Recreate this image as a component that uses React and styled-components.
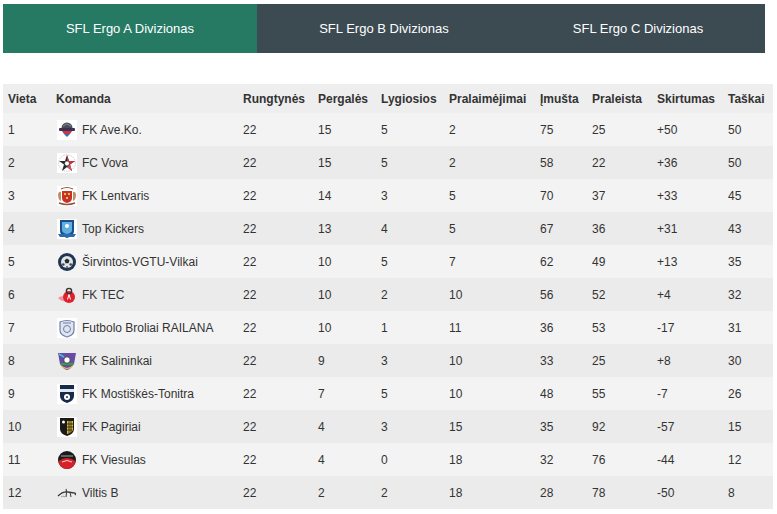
import React from "react";
import styled, { createGlobalStyle } from "styled-components";

const GlobalStyle = createGlobalStyle`
    body {
        margin: 0;
        background: #ffffff;
        font-family: "Liberation Sans", Arial, sans-serif;
        color: #333333;
    }
`;

const divisions = ["SFL Ergo A Divizionas", "SFL Ergo B Divizionas", "SFL Ergo C Divizionas"];

const columns = [
    { title: "Vieta", width: 48 },
    { title: "Komanda", width: 187 },
    { title: "Rungtynės", width: 75 },
    { title: "Pergalės", width: 63 },
    { title: "Lygiosios", width: 68 },
    { title: "Pralaimėjimai", width: 91 },
    { title: "Įmušta", width: 52 },
    { title: "Praleista", width: 65 },
    { title: "Skirtumas", width: 71 },
    { title: "Taškai", width: 50 },
];

const standings = [
    [1, "FK Ave.Ko.", "aveko", 22, 15, 5, 2, 75, 25, "+50", 50],
    [2, "FC Vova", "vova", 22, 15, 5, 2, 58, 22, "+36", 50],
    [3, "FK Lentvaris", "lentvaris", 22, 14, 3, 5, 70, 37, "+33", 45],
    [4, "Top Kickers", "kickers", 22, 13, 4, 5, 67, 36, "+31", 43],
    [5, "Širvintos-VGTU-Vilkai", "sirvintos", 22, 10, 5, 7, 62, 49, "+13", 35],
    [6, "FK TEC", "tec", 22, 10, 2, 10, 56, 52, "+4", 32],
    [7, "Futbolo Broliai RAILANA", "broliai", 22, 10, 1, 11, 36, 53, "-17", 31],
    [8, "FK Salininkai", "salininkai", 22, 9, 3, 10, 33, 25, "+8", 30],
    [9, "FK Mostiškės-Tonitra", "mostiskes", 22, 7, 5, 10, 48, 55, "-7", 26],
    [10, "FK Pagiriai", "pagiriai", 22, 4, 3, 15, 35, 92, "-57", 15],
    [11, "FK Viesulas", "viesulas", 22, 4, 0, 18, 32, 76, "-44", 12],
    [12, "Viltis B", "viltis", 22, 2, 2, 18, 28, 78, "-50", 8],
];

// small club crests, roughly drawn at 20x20
function Logo({ kind }) {
    switch (kind) {
        case "aveko":
            return (
                <svg width="20" height="20" viewBox="0 0 20 20">
                    <rect width="20" height="20" fill="#fff" />
                    <circle cx="10" cy="8" r="5.5" fill="#4a4d5c" />
                    <path d="M6 6 L10 4 L14 6 M7 10 L13 10" stroke="#9a9aa6" strokeWidth="0.8" fill="none" />
                    <rect x="2" y="8" width="16" height="3" rx="1" fill="#3e3050" />
                    <path d="M5 11 L15 11 L13 14 L7 14 Z" fill="#c43848" />
                    <path d="M7 14 L13 14 L10 17 Z" fill="#3b6ab0" />
                </svg>
            );
        case "vova":
            return (
                <svg width="20" height="20" viewBox="0 0 20 20">
                    <rect width="20" height="20" fill="#fff" />
                    <circle cx="10" cy="10" r="8.3" fill="none" stroke="#bbb" strokeWidth="0.8" strokeDasharray="1.5 1" />
                    <path d="M10 2 L12 8 L18 8 L13 11.5 L15 18 L10 14 L5 18 L7 11.5 L2 8 L8 8 Z" fill="#2a2a2a" />
                    <path d="M10 2 L12 8 L18 8 L13 11.5 L10 10 Z" fill="#d8283a" />
                    <path d="M13 11.5 L15 18 L10 14 Z" fill="#e05060" />
                    <circle cx="10" cy="10.5" r="2.4" fill="#fff" stroke="#333" strokeWidth="0.6" />
                </svg>
            );
        case "lentvaris":
            return (
                <svg width="20" height="20" viewBox="0 0 20 20">
                    <rect width="20" height="20" fill="#fff" />
                    <path d="M4 3 Q10 0 16 3" stroke="#8a5a3a" strokeWidth="1.2" fill="none" />
                    <path d="M1 8 Q2 5 4 6 L4 15 Q1 14 1 8 Z" fill="#c09060" />
                    <path d="M19 8 Q18 5 16 6 L16 15 Q19 14 19 8 Z" fill="#c09060" />
                    <path d="M5 5 L15 5 L15 12 Q15 16 10 17 Q5 16 5 12 Z" fill="#c8302c" />
                    <rect x="7" y="7" width="2" height="2" fill="#f0c040" />
                    <rect x="11" y="7" width="2" height="2" fill="#f0c040" />
                    <rect x="9" y="11" width="2" height="2" fill="#f0c040" />
                    <path d="M2 17 Q10 20 18 17" stroke="#8a5a3a" strokeWidth="1.4" fill="none" />
                </svg>
            );
        case "kickers":
            return (
                <svg width="20" height="20" viewBox="0 0 20 20">
                    <rect width="20" height="20" fill="#fff" />
                    <path d="M3 1 L17 1 L17 12 Q17 17 10 19 Q3 17 3 12 Z" fill="#1d4e8c" />
                    <path d="M5 3 L15 3 L15 11 Q15 14 10 15 Q5 14 5 11 Z" fill="#5fb0e0" />
                    <circle cx="10" cy="7" r="2" fill="#fff" />
                    <path d="M1 15 L19 15 L17 18 L3 18 Z" fill="#2a68b0" />
                </svg>
            );
        case "sirvintos":
            return (
                <svg width="20" height="20" viewBox="0 0 20 20">
                    <circle cx="10" cy="10" r="9" fill="#1f3550" />
                    <circle cx="10" cy="10" r="6" fill="#dfe5ec" />
                    <path d="M10 6.5 L12.5 8.3 L11.5 11.2 L8.5 11.2 L7.5 8.3 Z" fill="#2a2a2a" />
                    <circle cx="6.3" cy="12.5" r="1.3" fill="#444" />
                    <circle cx="13.7" cy="12.5" r="1.3" fill="#444" />
                    <circle cx="10" cy="15" r="1" fill="#555" />
                </svg>
            );
        case "tec":
            return (
                <svg width="20" height="20" viewBox="0 0 20 20">
                    <path d="M1 13 Q4 10 8 12 L8 16 Q4 17 1 13 Z" fill="#f07080" opacity="0.7" />
                    <circle cx="12" cy="12" r="6" fill="#e0202a" />
                    <circle cx="12" cy="6" r="2.6" fill="none" stroke="#333" strokeWidth="1.4" />
                    <path d="M10.5 14.5 L12 9.5 L13.5 14.5" stroke="#fff" strokeWidth="1" fill="none" />
                </svg>
            );
        case "broliai":
            return (
                <svg width="20" height="20" viewBox="0 0 20 20">
                    <rect width="20" height="20" fill="#fff" />
                    <path d="M3 4 Q10 1 17 4 L17 12 Q17 17 10 19 Q3 17 3 12 Z" fill="#dfe4f0" stroke="#6f7fa8" strokeWidth="1.2" />
                    <circle cx="10" cy="11" r="3.5" fill="none" stroke="#6f7fa8" strokeWidth="1" />
                    <path d="M6 5 L14 5" stroke="#6f7fa8" strokeWidth="1" />
                </svg>
            );
        case "salininkai":
            return (
                <svg width="20" height="20" viewBox="0 0 20 20">
                    <path d="M1 2 L19 2 L17 13 Q14 18 10 19 Q6 18 3 13 Z" fill="#6a4aa8" />
                    <path d="M4 14 Q10 20 16 14 L15 16 Q10 20 5 16 Z" fill="#f0d020" />
                    <path d="M3 12 L17 12 L16 14 L4 14 Z" fill="#30a040" />
                    <circle cx="10" cy="9" r="3.2" fill="#fff" stroke="#222" strokeWidth="0.7" />
                    <path d="M2 3 L7 6" stroke="#40c0e0" strokeWidth="1.5" />
                </svg>
            );
        case "mostiskes":
            return (
                <svg width="20" height="20" viewBox="0 0 20 20">
                    <rect width="20" height="20" fill="#fff" />
                    <path d="M3 1 L17 1 L17 12 Q17 17 10 19 Q3 17 3 12 Z" fill="#172a4a" />
                    <rect x="3" y="5" width="14" height="3" fill="#dfe6f0" />
                    <circle cx="10" cy="13" r="3" fill="#fff" />
                    <circle cx="10" cy="13" r="1" fill="#172a4a" />
                </svg>
            );
        case "pagiriai":
            return (
                <svg width="20" height="20" viewBox="0 0 20 20">
                    <rect width="20" height="20" fill="#fff" />
                    <path d="M3 1 L17 1 L17 12 Q17 17 10 19 Q3 17 3 12 Z" fill="#1a1a1a" />
                    <path d="M10 4 L16 4 L16 12 Q16 15 10 17 Z" fill="#e0bc2a" />
                    <path d="M10 7 L16 7 M10 10 L16 10 M10 13 L15 13 M12 4 L12 16 M14 4 L14 15" stroke="#1a1a1a" strokeWidth="0.8" />
                    <circle cx="6.5" cy="5" r="1.5" fill="#fff" />
                </svg>
            );
        case "viesulas":
            return (
                <svg width="20" height="20" viewBox="0 0 20 20">
                    <circle cx="10" cy="10" r="9" fill="#1a1a1a" />
                    <path d="M1.5 11 Q10 5 18.5 11 Q17 19 10 19 Q3 19 1.5 11 Z" fill="#d8202a" />
                    <path d="M5 12 Q10 9 15 12" stroke="#fff" strokeWidth="0.8" fill="none" />
                    <path d="M4 6 L16 6" stroke="#ccc" strokeWidth="0.8" />
                </svg>
            );
        case "viltis":
        default:
            return (
                <svg width="20" height="20" viewBox="0 0 20 20">
                    <path d="M1 13 Q6 8 11 9 L18 10 Q19 11 18 12" stroke="#333" strokeWidth="1.3" fill="none" />
                    <path d="M9 6 Q10 8 9 14 M13 9 L14 14" stroke="#444" strokeWidth="1.1" fill="none" />
                    <path d="M4 14 Q6 12 8 14" stroke="#888" strokeWidth="0.8" fill="none" />
                </svg>
            );
    }
}

export default function App() {
    const [active, setActive] = React.useState(0);
    return (
        <Page>
            <GlobalStyle />
            <Tabs>
                {divisions.map((name, i) => (
                    <Tab key={name} $active={i === active} onClick={() => setActive(i)}>
                        {name}
                    </Tab>
                ))}
            </Tabs>
            <Table>
                <colgroup>
                    {columns.map((col) => (
                        <col key={col.title} width={col.width} />
                    ))}
                </colgroup>
                <thead>
                    <HeadRow>
                        {columns.map((col) => (
                            <Th key={col.title}>{col.title}</Th>
                        ))}
                    </HeadRow>
                </thead>
                <tbody>
                    {standings.map(([place, team, logo, ...stats]) => (
                        <Row key={place}>
                            <Td>{place}</Td>
                            <Td>
                                <Team>
                                    <LogoBox>
                                        <Logo kind={logo} />
                                    </LogoBox>
                                    {team}
                                </Team>
                            </Td>
                            {stats.map((value, i) => (
                                <Td key={i}>{value}</Td>
                            ))}
                        </Row>
                    ))}
                </tbody>
            </Table>
        </Page>
    );
}

const Page = styled.div`
    padding: 4px 0 0 3px;
`;

const Tabs = styled.div`
    display: flex;
    width: 762px;
`;

const Tab = styled.div`
    flex: 1;
    height: 49px;
    display: flex;
    align-items: center;
    justify-content: center;
    background: ${(p) => (p.$active ? "#267a64" : "#3c4b52")};
    color: #ffffff;
    font-size: 13px;
    cursor: pointer;
`;

const Table = styled.table`
    margin-top: 31px;
    width: 770px;
    border-collapse: collapse;
    table-layout: fixed;
    font-size: 12px;
    color: #333333;
`;

const HeadRow = styled.tr`
    height: 29px;
    background: #eeeeee;
`;

const Th = styled.th`
    padding: 0 0 0 5px;
    text-align: left;
    font-weight: bold;
    white-space: nowrap;
    color: #333333;
`;

const Row = styled.tr`
    height: 33px;
    background: #f3f3f3;

    &:nth-child(even) {
        background: #ebebeb;
    }
`;

const Td = styled.td`
    padding: 0 0 0 5px;
    white-space: nowrap;
    vertical-align: middle;
`;

const Team = styled.div`
    display: flex;
    align-items: center;
    gap: 5px;
`;

const LogoBox = styled.span`
    display: inline-flex;
    width: 20px;
    height: 20px;
    margin-left: 1px;
`;
